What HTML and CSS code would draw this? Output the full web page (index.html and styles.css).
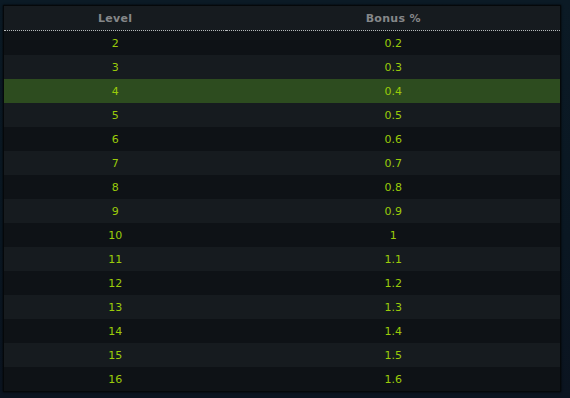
FILE: index.html
```html
<!DOCTYPE html>
<html>
<head>
<meta charset="utf-8">
<link rel="stylesheet" href="styles.css">
</head>
<body>
<div class="panel">
  <table class="bonus">
    <thead>
      <tr><th class="c1">Level</th><th class="c2">Bonus %</th></tr>
    </thead>
    <tbody>
      <tr class="odd"><td>2</td><td>0.2</td></tr>
      <tr class="even"><td>3</td><td>0.3</td></tr>
      <tr class="hl"><td>4</td><td>0.4</td></tr>
      <tr class="even"><td>5</td><td>0.5</td></tr>
      <tr class="odd"><td>6</td><td>0.6</td></tr>
      <tr class="even"><td>7</td><td>0.7</td></tr>
      <tr class="odd"><td>8</td><td>0.8</td></tr>
      <tr class="even"><td>9</td><td>0.9</td></tr>
      <tr class="odd"><td>10</td><td>1</td></tr>
      <tr class="even"><td>11</td><td>1.1</td></tr>
      <tr class="odd"><td>12</td><td>1.2</td></tr>
      <tr class="even"><td>13</td><td>1.3</td></tr>
      <tr class="odd"><td>14</td><td>1.4</td></tr>
      <tr class="even"><td>15</td><td>1.5</td></tr>
      <tr class="odd"><td>16</td><td>1.6</td></tr>
    </tbody>
  </table>
</div>
</body>
</html>
```
FILE: styles.css
```css
html, body {
  margin: 0;
  padding: 0;
}
body {
  width: 570px;
  height: 398px;
  overflow: hidden;
  background: linear-gradient(180deg, #0b1a25 0%, #0a1722 60%, #0b1420 100%);
  font-family: "DejaVu Sans", Verdana, sans-serif;
  padding: 5px 0 0 3px;
  box-sizing: border-box;
}
.panel {
  width: 556px;
  border: 1px solid #05080a;
  background: #0e1216;
  box-shadow: 0 0 2px #000;
}
.bonus {
  width: 100%;
  border-collapse: collapse;
  table-layout: fixed;
}
.bonus th {
  height: 24px;
  padding: 0;
  background: #161b1f;
  color: #858789;
  font-size: 11px;
  font-weight: bold;
  letter-spacing: 0.3px;
  text-align: center;
  border-bottom: 1px dotted #b5b8ba;
}
.bonus th.c1 { width: 40%; }
.bonus th.c2 { width: 60%; }
.bonus td {
  height: 24px;
  padding: 0;
  text-align: center;
  color: #9acb0a;
  font-size: 11px;
}
.odd { background: #0e1216; }
.even { background: #161b1f; }
.hl { background: #2d4c1f; }
```
